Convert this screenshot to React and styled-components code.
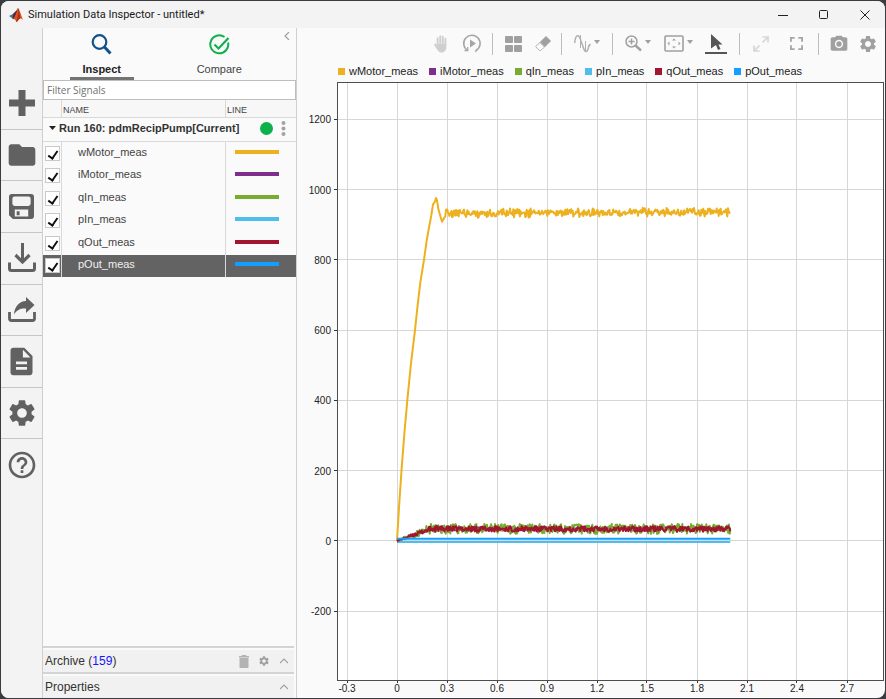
import { useState, useEffect, useRef } from "react";
import styled, { createGlobalStyle } from "styled-components";
import { MdFolder, MdSettings, MdDescription, MdHelpOutline, MdCameraAlt } from "react-icons/md";

const signals = [
  { name: "wMotor_meas", color: "#edb120" },
  { name: "iMotor_meas", color: "#7e2f8e" },
  { name: "qIn_meas", color: "#77ac30" },
  { name: "pIn_meas", color: "#4dbeee" },
  { name: "qOut_meas", color: "#a2142f" },
  { name: "pOut_meas", color: "#139fff" },
];

/* ---------- icons ---------- */

const MatlabLogo = () => (
  <svg width="14" height="14" viewBox="0 0 14 14" aria-hidden="true">
    <path d="M0 8l4-2 3-3-1 4-2 4-1-1z" fill="#3f74b0" />
    <path d="M4 6l3-3 2-3-1 5-3 6-1.500 0z" fill="#5b2a35" />
    <path d="M9 0c1.500 1 3 7 5 12-2-2-3-2-4.500 0-1 1.500-2 2-2.500 2 0-2-1-3-3-3 2-1 3.500-7 5-11z" fill="#d9541e" />
    <path d="M9 0c.5 4 .5 8-2 14 2 0 2.500-3.500 4.500-4-1-4-1.500-8-2.500-10z" fill="#a8301c" />
  </svg>
);

const SearchIcon = () => (
  <svg width="21" height="21" viewBox="0 0 21 21" fill="none" stroke="#11528b" aria-hidden="true">
    <circle cx="8.500" cy="8" r="6.800" strokeWidth="2.200" />
    <path d="M13 12.500l6.500 7" strokeWidth="3" />
  </svg>
);

const CompareIcon = () => (
  <svg width="21" height="21" viewBox="0 0 21 21" fill="none" stroke="#0db14b" strokeWidth="2" aria-hidden="true">
    <path d="M15.500 3a9 9 0 1 0 3.600 5.500" />
    <path d="M5.500 10.500l4 4L19.500 4" strokeWidth="2.200" />
  </svg>
);

const PlusIcon = () => (
  <svg width="26" height="26" viewBox="0 0 26 26" aria-hidden="true">
    <path d="M9.500 0h7v9.500H26v7h-9.500V26h-7v-9.500H0v-7h9.500z" fill="#616161" />
  </svg>
);

const SaveIcon = () => (
  <svg width="25" height="25" viewBox="0 0 26 26" aria-hidden="true">
    <path
      fillRule="evenodd"
      d="M3 0h20a3 3 0 0 1 3 3v20a3 3 0 0 1-3 3H4l-4-4V3a3 3 0 0 1 3-3zM6 2.500A2.500 2.500 0 0 0 3.500 5v5A2.500 2.500 0 0 0 6 12.500h14a2.500 2.500 0 0 0 2.500-2.500V5A2.500 2.500 0 0 0 20 2.500zM6 16v7.500h14V16zM8 18h3v4H8z"
      fill="#616161"
    />
  </svg>
);

const DownloadIcon = () => (
  <svg width="30" height="30" viewBox="0 0 30 30" fill="none" stroke="#616161" aria-hidden="true">
    <path d="M2.500 19.500v6a2 2 0 0 0 2 2h21a2 2 0 0 0 2-2v-6" strokeWidth="3" />
    <path d="M15.500 0v18" strokeWidth="3" />
    <path d="M8.500 12l7 7 7-7" strokeWidth="3.200" />
  </svg>
);

const ShareIcon = () => (
  <svg width="30" height="26" viewBox="0 0 30 26" aria-hidden="true">
    <path d="M2.500 15v6.500a2 2 0 0 0 2 2h21a2 2 0 0 0 2-2V15" fill="none" stroke="#616161" strokeWidth="2.800" />
    <path d="M7 17.500C7.500 9.500 12.500 4 19 4V0L27.500 8 19 16v-4.500C14 11 10 12.500 7 17.500z" fill="#616161" />
  </svg>
);

const TrashIcon = () => (
  <svg width="10" height="13" viewBox="0 0 10 13" fill="#b3b3b3" aria-hidden="true">
    <path d="M3 0h4l.5 1H10v1.500H0V1h2.500zM.5 3h9v9a1 1 0 0 1-1 1h-7a1 1 0 0 1-1-1z" />
  </svg>
);

const HandIcon = () => (
  <svg width="14" height="18" viewBox="0 0 14 18" fill="none" stroke="#cfcfcf" strokeLinecap="round" aria-hidden="true">
    <path d="M3.600 10V3.200M6.200 9V1.300M8.800 9V1.800M11.400 10V3.800" strokeWidth="1.900" />
    <path d="M1 9.500l2.500 4" strokeWidth="1.900" />
    <path d="M2.700 9h9.600v3c0 3-1.500 5.500-4.800 5.500S3.500 15 2.700 13z" fill="#cfcfcf" stroke="none" />
  </svg>
);

const ReplayIcon = () => (
  <svg width="20" height="19" viewBox="0 0 20 19" fill="none" stroke="#a6a6a6" strokeWidth="1.600" aria-hidden="true">
    <path d="M5.500 16.300a8.200 8.200 0 1 1 8.500.2" />
    <path d="M5.800 13v3.500H2.500M13.500 18l1-2.500" strokeWidth="1.300" />
    <path d="M8 5.500v8l6-4z" fill="#a6a6a6" stroke="none" />
  </svg>
);

const GridIcon = () => (
  <svg width="17" height="16" viewBox="0 0 17 16" fill="#a0a0a0" aria-hidden="true">
    <rect x="0" y="0" width="8" height="7" rx="1" />
    <rect x="9" y="0" width="8" height="7" rx="1" />
    <rect x="0" y="9" width="8" height="7" rx="1" />
    <rect x="9" y="9" width="8" height="7" rx="1" />
  </svg>
);

const EraserIcon = () => (
  <svg width="16" height="16" viewBox="0 0 16 16" aria-hidden="true">
    <path d="M11 .5L15.500 5 9.500 11 5 6.500z" fill="#a0a0a0" stroke="#a0a0a0" />
    <path d="M5 6.500L9.500 11 6 14.500H4.500l-4-4z" fill="#fafafa" stroke="#b5b5b5" />
  </svg>
);

const WaveIcon = () => (
  <svg width="17" height="18" viewBox="0 0 17 18" fill="none" stroke="#b0b0b0" strokeWidth="1.500" aria-hidden="true">
    <path d="M.7 8C1.500-1 5-1.500 7 6l2.500 7c1.500 5 4 5.500 5.500-3" />
    <path d="M6.500 0v13M11.500 6v10" strokeWidth="1" />
    <path d="M15 11l1.500-2" />
  </svg>
);

const ZoomIcon = () => (
  <svg width="17" height="17" viewBox="0 0 17 17" fill="none" stroke="#a0a0a0" aria-hidden="true">
    <circle cx="6.500" cy="6.500" r="5.500" strokeWidth="1.500" />
    <path d="M10.500 10.500l5.500 5" strokeWidth="2.400" />
    <path d="M6.500 3.500v6M3.500 6.500h6" strokeWidth="1.500" />
  </svg>
);

const FitIcon = () => (
  <svg width="20" height="17" viewBox="0 0 20 17" aria-hidden="true">
    <rect x="1" y="1" width="18" height="15" rx="1" fill="none" stroke="#a0a0a0" strokeWidth="1.600" />
    <path d="M8 5.500L10 3.500l2 2zM8 11.500l2 2 2-2zM5.500 6.500l-2 2 2 2zM14.500 6.500l2 2-2 2z" fill="#a0a0a0" />
  </svg>
);

const PointerIcon = () => (
  <svg width="13" height="16" viewBox="0 0 13 16" aria-hidden="true">
    <path d="M1 0l11.500 10.500H8.500l2 4.500-2.500 1-2-5L1 14.500z" fill="#555" />
  </svg>
);

const ExpandIcon = () => (
  <svg width="16" height="16" viewBox="0 0 16 16" fill="none" stroke="#d6d6d6" strokeWidth="1.700" aria-hidden="true">
    <path d="M9.500 1H15v5.500M15 1L9.500 6.500M6.500 15H1V9.500M1 15l5.500-5.500" />
  </svg>
);

const FullscreenIcon = () => (
  <svg width="13" height="13" viewBox="0 0 14 14" fill="none" stroke="#a6a6a6" strokeWidth="2" aria-hidden="true">
    <path d="M1 5V1h4M9 1h4v4M13 9v4H9M5 13H1V9" />
  </svg>
);

const Chevron = ({ left }) => (
  <svg width="8" height="8" viewBox="0 0 8 8" fill="none" stroke="#a0a0a0" strokeWidth="1.200" aria-hidden="true">
    <path d={left ? "M6 0L2 4l4 4" : "M0 6l4-4 4 4"} />
  </svg>
);

/* ---------- plot ---------- */

const X_MIN = -0.36;
const X_MAX = 2.922;
const Y_MIN = -396;
const Y_MAX = 1306;
const pad = { left: 40, right: 1, top: 2, bottom: 18 };

const xTicks = [-0.3, 0, 0.3, 0.6, 0.9, 1.2, 1.5, 1.8, 2.1, 2.4, 2.7];
const yTicks = [-200, 0, 200, 400, 600, 800, 1000, 1200];

// small seeded generator, so that the trace is the same on every load
function makeNoise(seed) {
  let s = seed;
  return () => {
    s = (s * 16807) % 2147483647;
    return s / 1073741823.5 - 1;
  };
}

function motorSpeed() {
  const noise = makeNoise(41);
  const pts = [
    [0, 0], [0.012, 95], [0.027, 200], [0.043, 300], [0.062, 400], [0.084, 505],
    [0.108, 600], [0.125, 675], [0.14, 735], [0.162, 800], [0.178, 855], [0.192, 892],
    [0.205, 925], [0.216, 958], [0.228, 966], [0.234, 976], [0.24, 970], [0.248, 945],
    [0.26, 925], [0.27, 908], [0.284, 920],
  ];
  for (let t = 0.29; t <= 2.001; t += 0.004) {
    pts.push([t, 931 + t * 3 + (noise() + noise()) * 7]);
  }
  return pts;
}

function flow(seed, spread) {
  const noise = makeNoise(seed);
  const pts = [];
  for (let t = 0; t <= 2.001; t += 0.004) {
    const level = 34 * Math.min(1, t / 0.2);
    pts.push([t, level + noise() * spread * Math.min(1, 0.15 + t / 0.24)]);
  }
  return pts;
}

const traces = [
  { color: "#edb120", points: motorSpeed() },
  { color: "#7e2f8e", points: flow(7, 5) },
  { color: "#77ac30", points: flow(23, 14) },
  { color: "#4dbeee", points: [[0, -3], [2, -3]] },
  { color: "#a2142f", points: flow(99, 8) },
  { color: "#139fff", points: [[0, 6], [2, 6]] },
];

function Plot() {
  const box = useRef(null);
  const [size, setSize] = useState({ width: 588, height: 617 });

  useEffect(() => {
    const observer = new ResizeObserver(([entry]) => {
      const { width, height } = entry.contentRect;
      setSize({ width: Math.round(width), height: Math.round(height) });
    });
    observer.observe(box.current);
    return () => observer.disconnect();
  }, []);

  const { width, height } = size;
  const right = width - pad.right;
  const bottom = height - pad.bottom;
  const x = (v) => pad.left + ((v - X_MIN) / (X_MAX - X_MIN)) * (right - pad.left);
  const y = (v) => bottom - ((v - Y_MIN) / (Y_MAX - Y_MIN)) * (bottom - pad.top);
  const crisp = (v) => Math.floor(v) + 0.5;

  return (
    <PlotBox ref={box}>
      <svg width={width} height={height} role="img" aria-label="Signals over time">
        <rect x={pad.left} y={pad.top} width={right - pad.left} height={bottom - pad.top} fill="#fff" />
        {xTicks.map((v) => (
          <g key={v}>
            <line x1={crisp(x(v))} x2={crisp(x(v))} y1={pad.top} y2={bottom} stroke="#d6d6d6" />
            <line x1={crisp(x(v))} x2={crisp(x(v))} y1={bottom} y2={bottom + 3} stroke="#333" />
            <TickText x={x(v)} y={bottom + 12} textAnchor="middle">{v}</TickText>
          </g>
        ))}
        {yTicks.map((v) => (
          <g key={v}>
            <line x1={pad.left} x2={right} y1={crisp(y(v))} y2={crisp(y(v))} stroke="#d6d6d6" />
            <line x1={pad.left - 3} x2={pad.left} y1={crisp(y(v))} y2={crisp(y(v))} stroke="#333" />
            <TickText x={pad.left - 6} y={y(v) + 4} textAnchor="end">{v}</TickText>
          </g>
        ))}
        <rect
          x={pad.left + 0.5}
          y={pad.top + 0.5}
          width={right - pad.left - 1}
          height={bottom - pad.top}
          fill="none"
          stroke="#4d4d4d"
        />
        {traces.map((t) => (
          <polyline
            key={t.color}
            points={t.points.map(([a, b]) => `${x(a).toFixed(1)},${y(b).toFixed(1)}`).join(" ")}
            fill="none"
            stroke={t.color}
            strokeWidth="2"
            strokeLinejoin="round"
          />
        ))}
      </svg>
    </PlotBox>
  );
}

/* ---------- page ---------- */

const railItems = [
  { label: "New", icon: <PlusIcon /> },
  { label: "Open", icon: <MdFolder size={32} /> },
  { label: "Save", icon: <SaveIcon /> },
  { label: "Import", icon: <DownloadIcon /> },
  { label: "Export", icon: <ShareIcon /> },
  { label: "Create report", icon: <MdDescription size={33} /> },
  { label: "Preferences", icon: <MdSettings size={32} /> },
  { label: "Help", icon: <MdHelpOutline size={32} /> },
];

function App() {
  const [checked, setChecked] = useState(signals.map(() => true));
  const [selected, setSelected] = useState("pOut_meas");
  const [filter, setFilter] = useState("");

  const toggle = (i) => setChecked(checked.map((c, n) => (n === i ? !c : c)));

  return (
    <Desktop>
      <GlobalStyle />
      <Window>
        <TitleBar>
          <MatlabLogo />
          <Title>Simulation Data Inspector - untitled*</Title>
          <WindowButton aria-label="Minimize">
            <svg width="10" height="10" stroke="#222"><path d="M0 5.500h10" /></svg>
          </WindowButton>
          <WindowButton aria-label="Maximize">
            <svg width="10" height="10" stroke="#222" fill="none"><rect x=".5" y=".5" width="8" height="8" rx="1" /></svg>
          </WindowButton>
          <WindowButton aria-label="Close">
            <svg width="10" height="10" stroke="#222"><path d="M.5.5l9 9M9.500.5l-9 9" /></svg>
          </WindowButton>
        </TitleBar>

        <Body>
          <Rail>
            <RailGroup>
              {railItems.map((item) => (
                <RailButton key={item.label} aria-label={item.label}>{item.icon}</RailButton>
              ))}
            </RailGroup>
          </Rail>

          <Panel>
            <Tabs>
              <Tab $active><SearchIcon /><span>Inspect</span></Tab>
              <Tab><CompareIcon /><span>Compare</span></Tab>
              <CollapseButton aria-label="Collapse panel"><Chevron left /></CollapseButton>
            </Tabs>
            <FilterInput
              aria-label="Filter Signals"
              placeholder="Filter Signals"
              value={filter}
              onChange={(e) => setFilter(e.target.value)}
            />
            <SignalTable>
              <colgroup>
                <col width="18" />
                <col />
                <col width="71" />
              </colgroup>
              <thead>
                <tr>
                  <HeadCell aria-label="Show" />
                  <HeadCell>NAME</HeadCell>
                  <HeadCell>LINE</HeadCell>
                </tr>
              </thead>
              <tbody>
                <tr>
                  <RunCell colSpan="3">
                    <RunRow>
                      <svg width="7" height="4" aria-hidden="true"><path d="M0 0h7L3.500 4z" fill="#222" /></svg>
                      <RunName>Run 160: pdmRecipPump[Current]</RunName>
                      <RunDot />
                      <MenuButton aria-label="Run menu">
                        <svg width="5" height="15" fill="#a3a3a3">
                          <circle cx="2.500" cy="2" r="2" />
                          <circle cx="2.500" cy="7.500" r="2" />
                          <circle cx="2.500" cy="13" r="2" />
                        </svg>
                      </MenuButton>
                    </RunRow>
                  </RunCell>
                </tr>
                {signals.map((s, i) => (
                  <SignalRow key={s.name} $selected={selected === s.name} onClick={() => setSelected(s.name)}>
                    <td>
                      <Checkbox id={s.name} checked={checked[i]} onChange={() => toggle(i)} />
                    </td>
                    <td><SignalLabel htmlFor={s.name}>{s.name}</SignalLabel></td>
                    <td><LineSample $color={s.color} /></td>
                  </SignalRow>
                ))}
              </tbody>
            </SignalTable>

            <Sections>
              <Section>
                <SectionTitle>Archive (<a href="#archive">159</a>)</SectionTitle>
                <SectionButton aria-label="Delete archive"><TrashIcon /></SectionButton>
                <SectionButton aria-label="Archive settings"><MdSettings size={12} /></SectionButton>
                <SectionButton aria-label="Expand archive"><Chevron /></SectionButton>
              </Section>
              <Section>
                <SectionTitle>Properties</SectionTitle>
                <SectionButton aria-label="Expand properties"><Chevron /></SectionButton>
              </Section>
            </Sections>
          </Panel>

          <Main>
            <Toolbar>
              <ToolButton aria-label="Pan"><HandIcon /></ToolButton>
              <ToolButton aria-label="Replay" $width={32}><ReplayIcon /></ToolButton>
              <Divider />
              <ToolButton aria-label="Layout" $width={32}><GridIcon /></ToolButton>
              <ToolButton aria-label="Clear" $width={28}><EraserIcon /></ToolButton>
              <Divider />
              <ToolButton aria-label="Cursors" $width={42}><WaveIcon /><Caret /></ToolButton>
              <Divider />
              <ToolButton aria-label="Zoom in" $width={42}><ZoomIcon /><Caret /></ToolButton>
              <ToolButton aria-label="Fit to view" $width={38}><FitIcon /><Caret /></ToolButton>
              <ToolButton aria-label="Select" $width={38}><ActiveTool><PointerIcon /></ActiveTool></ToolButton>
              <Divider />
              <ToolButton aria-label="Expand" $width={34}><ExpandIcon /></ToolButton>
              <ToolButton aria-label="Full screen" $width={36}><FullscreenIcon /></ToolButton>
              <Divider />
              <ToolButton aria-label="Snapshot" $width={32}><MdCameraAlt size={20} /></ToolButton>
              <ToolButton aria-label="Settings" $width={26}><MdSettings size={20} /></ToolButton>
            </Toolbar>
            <Legend>
              {signals.map((s) => (
                <LegendItem key={s.name} $color={s.color}>{s.name}</LegendItem>
              ))}
            </Legend>
            <Plot />
          </Main>
        </Body>
      </Window>
    </Desktop>
  );
}

const GlobalStyle = createGlobalStyle`
  * {
    box-sizing: border-box;
  }
  body {
    margin: 0;
    background: #3b3b3f;
    font-family: "Liberation Sans", Arial, sans-serif;
    font-size: 11px;
    color: #3c3c3c;
  }
  button {
    border: 0;
    padding: 0;
    background: none;
    font: inherit;
    color: inherit;
    cursor: pointer;
  }
  svg {
    display: block;
    flex: none;
  }
`;

const Desktop = styled.div`
  height: 100vh;
  min-height: 560px;
  padding: 1px;
`;

const Window = styled.div`
  display: flex;
  flex-direction: column;
  height: 100%;
  overflow: hidden;
  background: #fafafa;
  border-radius: 8px;
`;

const TitleBar = styled.header`
  display: flex;
  align-items: center;
  height: 27px;
  flex: none;
  padding-left: 8px;
  background: #f3f3f3;
`;

const Title = styled.h1`
  flex: 1;
  margin: 0 0 0 5px;
  font-family: Roboto, "Noto Sans", sans-serif;
  font-size: 11px;
  font-weight: 400;
  color: #1a1a1a;
`;

const WindowButton = styled.button`
  display: flex;
  align-items: center;
  justify-content: center;
  width: 41px;
  height: 27px;
`;

const Body = styled.div`
  display: flex;
  flex: 1;
  min-height: 0;
`;

const Rail = styled.nav`
  width: 42px;
  flex: none;
  padding-top: 50px;
  background: #f3f3f3;
  border-right: 1px solid #cfcfcf;
`;

const RailGroup = styled.div`
  display: flex;
  flex-direction: column;
  height: 412px;
`;

const RailButton = styled.button`
  display: flex;
  align-items: center;
  justify-content: center;
  flex: 1;
  color: #616161;
  border-bottom: 1px solid #c6c6c6;
  &:last-child {
    border-bottom: 0;
  }
`;

const Panel = styled.aside`
  display: flex;
  flex-direction: column;
  width: 254px;
  flex: none;
  border-right: 1px solid #cfcfcf;
`;

const Tabs = styled.div`
  display: flex;
  height: 52px;
  flex: none;
`;

const Tab = styled.button`
  display: flex;
  flex-direction: column;
  align-items: center;
  flex: 1;
  padding-top: 6px;
  font-size: 11px;
  font-weight: ${(props) => (props.$active ? "bold" : "normal")};
  color: ${(props) => (props.$active ? "#222" : "#444")};
  span {
    width: 64px;
    margin-top: 6px;
    line-height: 16px;
    border-bottom: 3px solid ${(props) => (props.$active ? "#737373" : "transparent")};
  }
`;

const CollapseButton = styled.button`
  display: flex;
  justify-content: center;
  width: 18px;
  padding-top: 4px;
`;

const FilterInput = styled.input`
  height: 20px;
  flex: none;
  padding: 0 3px;
  border: 1px solid #bdbdbd;
  border-radius: 0;
  background: #fff;
  font-family: "Open Sans", "Noto Sans", sans-serif;
  font-size: 10px;
  color: #333;
  &::placeholder {
    color: #707070;
  }
`;

const SignalTable = styled.table`
  width: 100%;
  height: 177px;
  border-spacing: 0;
  table-layout: fixed;
  td {
    padding: 0;
  }
`;

const HeadCell = styled.th`
  height: 18px;
  padding: 2px 1px 0;
  font-size: 9px;
  font-weight: normal;
  text-align: left;
  color: #444;
  background: #f7f7f7;
  border-bottom: 1px solid #d9d9d9;
  & + & {
    border-left: 1px solid #d9d9d9;
  }
`;

const RunCell = styled.td`
  height: 24px;
  border-bottom: 1px solid #d9d9d9;
`;

const RunRow = styled.div`
  display: flex;
  align-items: center;
  padding: 0 3px 3px 6px;
`;

const RunName = styled.strong`
  flex: 1;
  margin-left: 3px;
  font-size: 11px;
  white-space: nowrap;
  color: #333;
`;

const RunDot = styled.span`
  width: 13px;
  height: 13px;
  border-radius: 50%;
  background: #0db14b;
`;

const MenuButton = styled.button`
  display: flex;
  justify-content: center;
  width: 20px;
`;

const SignalRow = styled.tr`
  color: ${(props) => (props.$selected ? "#f0f0f0" : "#444")};
  background: ${(props) => (props.$selected ? "#636363" : "transparent")};
  td + td {
    padding-bottom: 3px;
    border-left: 1px solid #d9d9d9;
  }
`;

const Checkbox = styled.input.attrs({ type: "checkbox" })`
  display: block;
  appearance: none;
  width: 15px;
  height: 15px;
  margin: 0 2px;
  background: #fff;
  border: 1px solid #c9c9c9;
  &:checked::before {
    content: "";
    display: block;
    width: 4px;
    height: 8px;
    margin: 2px 0 0 4px;
    border: solid #111;
    border-width: 0 2px 2px 0;
    transform: rotate(35deg);
  }
`;

const SignalLabel = styled.label`
  display: block;
  padding-left: 16px;
  line-height: 14px;
`;

const LineSample = styled.div`
  width: 44px;
  height: 4px;
  margin-left: 9px;
  background: ${(props) => props.$color};
`;

const Sections = styled.div`
  margin-top: auto;
  padding-right: 2px;
`;

const Section = styled.section`
  display: flex;
  align-items: center;
  height: 26px;
  padding: 2px 0 0 2px;
  background: #f1f1f1;
  border-top: 2px solid #d4d4d4;
  box-shadow: inset 0 2px #fafafa;
`;

const SectionTitle = styled.h2`
  flex: 1;
  margin: 0;
  font-size: 12px;
  font-weight: normal;
  color: #333;
  a {
    color: #1414ff;
    text-decoration: none;
  }
`;

const SectionButton = styled.button`
  display: flex;
  align-items: center;
  justify-content: center;
  width: 20px;
  height: 20px;
  color: #a0a0a0;
`;

const Main = styled.main`
  display: flex;
  flex-direction: column;
  flex: 1;
  min-width: 0;
`;

const Toolbar = styled.div`
  display: flex;
  align-items: center;
  justify-content: flex-end;
  height: 31px;
  flex: none;
  padding-right: 4px;
`;

const ToolButton = styled.button`
  display: flex;
  align-items: center;
  justify-content: center;
  gap: 3px;
  width: ${(props) => props.$width || 30}px;
  height: 26px;
  color: #a0a0a0;
`;

const ActiveTool = styled.span`
  display: flex;
  justify-content: center;
  width: 22px;
  padding-bottom: 2px;
  border-bottom: 2px solid #555;
`;

const Caret = styled.span`
  border: 3px solid transparent;
  border-top: 4px solid #a0a0a0;
  border-bottom: 0;
  margin-bottom: 3px;
`;

const Divider = styled.span`
  width: 1px;
  height: 22px;
  margin: 0 4px;
  background: #bdbdbd;
`;

const Legend = styled.ul`
  display: flex;
  gap: 11px;
  height: 21px;
  flex: none;
  align-items: center;
  margin: 0;
  padding: 3px 0 0 41px;
  list-style: none;
  color: #222;
`;

const LegendItem = styled.li`
  display: flex;
  align-items: center;
  gap: 4px;
  white-space: nowrap;
  &::before {
    content: "";
    width: 7px;
    height: 7px;
    background: ${(props) => props.$color};
  }
`;

const PlotBox = styled.div`
  flex: 1;
  min-height: 0;
  overflow: hidden;
`;

const TickText = styled.text`
  font-size: 10px;
  fill: #222;
`;

export default App;
